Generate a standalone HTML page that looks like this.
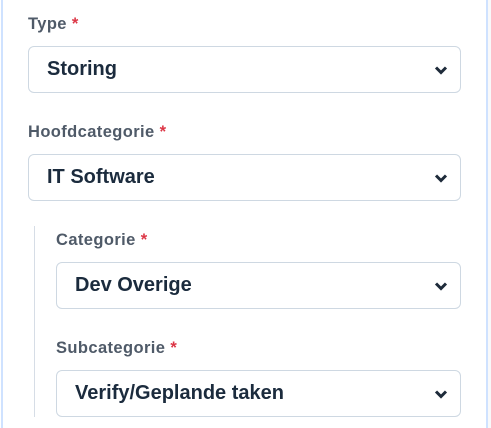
<!DOCTYPE html>
<html><head><style>
body{margin:0;width:491px;height:428px;background:#fff;position:relative;overflow:hidden;font-family:"Liberation Sans",sans-serif}
.lb{position:absolute;left:1px;top:0;width:2px;height:428px;background:#cfe2ff}
.rb{position:absolute;left:486px;top:0;width:2px;height:428px;background:#cfe2ff}
.rg{position:absolute;left:488px;top:0;width:3px;height:428px;background:#f8f9fa}
.vl{position:absolute;left:34px;top:226px;width:1px;height:191px;background:#d6dde6}
.lab{position:absolute;font-size:16.5px;font-weight:bold;color:#4f5a68;letter-spacing:0.4px}
.lab span{color:#dc3545}
.sel{position:absolute;border:1px solid #ced8e2;border-radius:6px;box-sizing:border-box;height:47px;font-size:20px;font-weight:bold;color:#1b2b3d;line-height:45px;padding-left:18px}
.sel svg{position:absolute;right:12px;top:18px}
</style></head><body>
<div class="lb"></div><div class="rb"></div><div class="rg"></div><div class="vl"></div>
<div class="lab" style="left:28px;top:15px">Type <span>*</span></div>
<div class="sel" style="left:28px;top:46px;width:433px">Storing<svg width="14" height="10" viewBox="0 0 14 10"><path d="M2 2.5L7 7.5 12 2.5" fill="none" stroke="#1e2b3a" stroke-width="3"/></svg></div>
<div class="lab" style="left:28px;top:123px">Hoofdcategorie <span>*</span></div>
<div class="sel" style="left:28px;top:154px;width:433px">IT Software<svg width="14" height="10" viewBox="0 0 14 10"><path d="M2 2.5L7 7.5 12 2.5" fill="none" stroke="#1e2b3a" stroke-width="3"/></svg></div>
<div class="lab" style="left:56px;top:231px">Categorie <span>*</span></div>
<div class="sel" style="left:56px;top:262px;width:405px">Dev Overige<svg width="14" height="10" viewBox="0 0 14 10"><path d="M2 2.5L7 7.5 12 2.5" fill="none" stroke="#1e2b3a" stroke-width="3"/></svg></div>
<div class="lab" style="left:56px;top:339px">Subcategorie <span>*</span></div>
<div class="sel" style="left:56px;top:370px;width:405px">Verify/Geplande taken<svg width="14" height="10" viewBox="0 0 14 10"><path d="M2 2.5L7 7.5 12 2.5" fill="none" stroke="#1e2b3a" stroke-width="3"/></svg></div>
</body></html>
